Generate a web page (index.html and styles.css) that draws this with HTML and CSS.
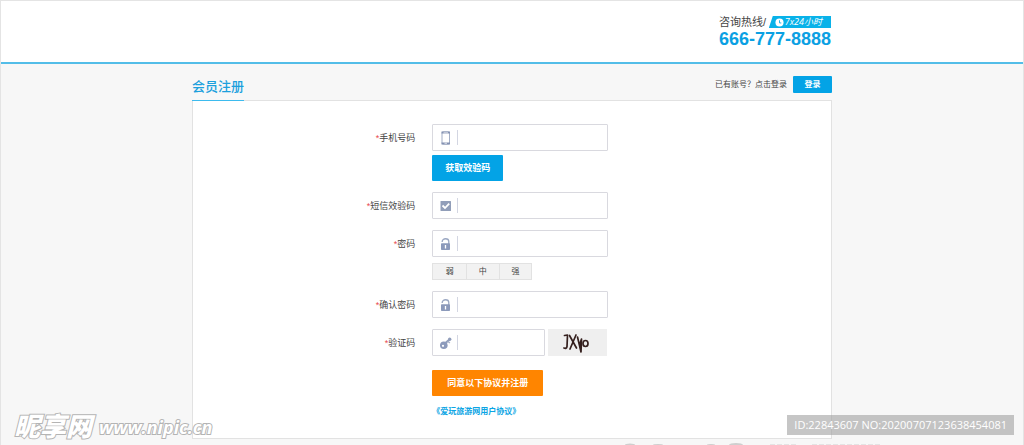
FILE: index.html
```html
<!DOCTYPE html>
<html lang="zh-CN">
<head>
<meta charset="utf-8">
<meta name="viewport" content="width=device-width, initial-scale=1">
<title>会员注册</title>
<link rel="stylesheet" href="styles.css">
</head>
<body>
<header class="site-header">
  <div class="container header-inner">
    <div class="hotline">
      <div class="hotline-top">
        <span>咨询热线/</span>
        <span class="hours">
          <svg class="hours-icon" viewBox="0 0 10 10" aria-hidden="true"><circle cx="5" cy="5" r="4.5" fill="#fff"/><path d="M5 2.5V5.5H7" fill="none" stroke="#09aee8"/></svg>
          <em>7x24小时</em>
        </span>
      </div>
      <strong class="hotline-number">666-777-8888</strong>
    </div>
  </div>
</header>

<main class="container">
  <div class="title-bar">
    <h1 class="title">会员注册</h1>
    <div class="login">
      <span>已有账号？点击登录</span>
      <button class="btn btn-login" type="button">登录</button>
    </div>
  </div>

  <form class="panel">
    <div class="row">
      <label class="label" for="phone"><i>*</i>手机号码</label>
      <div class="field">
        <svg class="icon" viewBox="0 0 12 14" aria-hidden="true"><rect x="2" y="1" width="7.500" height="12" rx="1" fill="#fff" stroke="#a3aec6"/><path d="M1.500 1.500H10M1.500 12.500H10" stroke="#8492b2" stroke-width="1.800"/><path d="M3.500 1.800H8M4.500 12.300H7" stroke="#fff" stroke-width=".7"/></svg>
        <input class="input" id="phone" type="tel">
      </div>
    </div>
    <div class="row row-code">
      <button class="btn btn-code" type="button">获取效验码</button>
    </div>
    <div class="row row-gap">
      <label class="label" for="sms"><i>*</i>短信效验码</label>
      <div class="field">
        <svg class="icon" viewBox="0 0 12 14" aria-hidden="true"><rect x=".5" y="2" width="10.500" height="10" rx=".5" fill="#919eb9"/><path d="M2.500 6.500L5 9L9.200 4.600" fill="none" stroke="#fff" stroke-width="1.800"/></svg>
        <input class="input" id="sms" type="text">
      </div>
    </div>
    <div class="row row-gap">
      <label class="label" for="password"><i>*</i>密码</label>
      <div class="field">
        <svg class="icon" viewBox="0 0 12 14" aria-hidden="true"><path d="M2.200 5V4.500C2.200 .8 8.800 .8 8.800 4.500V7" fill="none" stroke="#9aa7c2" stroke-width="1.300"/><rect x="1" y="6.300" width="9" height="6.700" rx=".8" fill="#8c9abb"/><path d="M5.500 8V11.500" stroke="#fff" stroke-width="1.300"/></svg>
        <input class="input" id="password" type="password">
      </div>
    </div>
    <div class="row row-strength">
      <div class="strength"><span>弱</span><span>中</span><span>强</span></div>
    </div>
    <div class="row row-gap">
      <label class="label" for="confirm"><i>*</i>确认密码</label>
      <div class="field">
        <svg class="icon" viewBox="0 0 12 14" aria-hidden="true"><path d="M2.200 5V4.500C2.200 .8 8.800 .8 8.800 4.500V7" fill="none" stroke="#9aa7c2" stroke-width="1.300"/><rect x="1" y="6.300" width="9" height="6.700" rx=".8" fill="#8c9abb"/><path d="M5.500 8V11.500" stroke="#fff" stroke-width="1.300"/></svg>
        <input class="input" id="confirm" type="password">
      </div>
    </div>
    <div class="row row-gap">
      <label class="label" for="captcha"><i>*</i>验证码</label>
      <div class="field field-short">
        <svg class="icon" viewBox="0 0 12 14" aria-hidden="true"><path d="M5 7.500L10 3" stroke="#919ebb" stroke-width="2.200"/><circle cx="9.700" cy="3.300" r="1.700" fill="#919ebb"/><path d="M7.800 5.300L9.800 7" stroke="#a5b0c8" stroke-width="1.500"/><circle cx="3.800" cy="9.200" r="3.800" fill="#8c9abb"/><circle cx="3" cy="9.800" r="1.100" fill="#fff"/></svg>
        <input class="input" id="captcha" type="text">
      </div>
      <svg class="captcha" viewBox="0 0 59 27" role="img" aria-label="验证码图片">
        <rect width="59" height="27" fill="#efefef"/>
        <g fill="none" stroke="#35201e" stroke-width="1.700" stroke-linecap="round" stroke-linejoin="round">
          <path d="M16.500 6.500L19.500 6L19 17.500Q18.500 20 16 19"/>
          <path d="M21.500 6.500L28.500 19M28 6L22 20"/>
          <path d="M29.500 8L31.500 16.500L33.500 10L33 23L31.500 16.500"/>
          <ellipse cx="37.500" cy="14.500" rx="2.500" ry="3"/>
        </g>
      </svg>
    </div>
    <div class="row row-submit">
      <button class="btn btn-submit" type="submit">同意以下协议并注册</button>
    </div>
    <div class="row row-link">
      <a class="agreement" href="#agreement">《爱玩旅游网用户协议》</a>
    </div>
  </form>
</main>

<svg class="footer-art" viewBox="0 0 260 2" aria-hidden="true"><g fill="#cfcfcf"><ellipse cx="6" cy="2" rx="5" ry="1.500"/><ellipse cx="34" cy="2" rx="5" ry="1"/><ellipse cx="87" cy="2" rx="4" ry="1"/><ellipse cx="112" cy="2" rx="7" ry="2"/></g><path d="M146 1.500H172M188 1.500H258" stroke="#e4e4e4" stroke-dasharray="5 2"/></svg>
<div class="watermark"><b>昵享网</b><em>www.nipic.cn</em></div>
<div class="image-id">ID:22843607 NO:20200707123638454081</div>
</body>
</html>
```
FILE: styles.css
```css
* {
  box-sizing: border-box;
}

body {
  position: relative;
  min-height: 100vh;
  margin: 0;
  overflow: hidden;
  border: 1px solid #e4e4e4;
  border-bottom: 0;
  background: #f7f7f7;
  color: #444;
  font: 9px/12px "Liberation Sans", "Noto Sans CJK SC", sans-serif;
}

.container {
  width: 100%;
  max-width: 640px;
  margin: 0 auto;
}

.site-header {
  border-bottom: 2px solid #53bde8;
  background: #fff;
}

.header-inner {
  display: flex;
  justify-content: flex-end;
  padding: 14px 1px 13px 0;
}

.hotline-top {
  display: flex;
  align-items: center;
  justify-content: space-between;
  font-size: 11px;
  line-height: 14px;
}

.hours {
  display: flex;
  align-items: center;
  gap: 1px;
  padding: 0 9px 0 6px;
  background: #09b2e9;
  clip-path: polygon(4px 0, 100% 0, 100% 100%, 0 100%);
  color: #fff;
  font: 9px/12px "Open Sans", "Noto Sans CJK SC", sans-serif;
}

.hours-icon {
  width: 9px;
  height: 9px;
}

.hotline-number {
  display: block;
  color: #0aa0e3;
  font-size: 18px;
  line-height: 20px;
}

.title-bar {
  display: flex;
  align-items: flex-start;
  justify-content: space-between;
  padding-top: 12px;
}

.title {
  z-index: 1;
  margin: 0 0 -1px;
  padding-bottom: 2px;
  border-bottom: 1px solid #3dbbee;
  color: #1ba0dd;
  font-size: 13px;
  font-weight: 500;
  line-height: 22px;
}

.login {
  display: flex;
  align-items: center;
  gap: 6px;
  font-size: 8px;
}

.btn {
  padding: 0;
  border: 0;
  border-radius: 1px;
  background: #03a3e6;
  color: #fff;
  font: bold 9px/26px "Liberation Sans", "Noto Sans CJK SC", sans-serif;
  cursor: pointer;
}

.btn-login {
  width: 39px;
  font-size: 8px;
  line-height: 17px;
}

.panel {
  padding: 23px 0 20px;
  border: 1px solid #e2e2e2;
  background: #fff;
}

.row {
  display: grid;
  grid-template-columns: 35% auto auto 1fr;
  align-items: center;
}

.row-gap {
  margin-top: 11px;
}

.row-code {
  margin-top: 4px;
}

.row-strength {
  margin-top: 6px;
}

.row-submit {
  margin-top: 14px;
}

.row-link {
  margin-top: 10px;
}

.row > :not(.label) {
  margin-left: 16px;
}

.row > :first-child:not(.label) {
  grid-column: 2;
}

.label {
  padding-right: 1px;
  text-align: right;
}

.label i {
  color: #e8484c;
  font-style: normal;
}

.field {
  display: flex;
  align-items: center;
  width: 176px;
  height: 27px;
  padding: 0 4px 0 7px;
  border: 1px solid #d9d9df;
  border-radius: 1px;
  background: #fff;
}

.field-short {
  width: 113px;
}

.icon {
  flex: none;
  width: 12px;
  height: 14px;
}

.input {
  flex: 1;
  min-width: 0;
  height: 15px;
  margin-left: 5px;
  padding: 0 4px;
  border: 0;
  border-left: 1px solid #d3d6e2;
  outline: 0;
  background: none;
  font: inherit;
}

.row > .captcha {
  width: 59px;
  height: 27px;
  margin-left: 3px;
}

.btn-code {
  width: 71px;
}

.btn-submit {
  width: 111px;
  background: #ff8500;
}

.strength {
  display: grid;
  grid-template-columns: 1fr 1fr 1fr;
  width: 100px;
  border: 1px solid #e2e2e2;
  background: #f2f2f2;
  font-size: 8px;
  line-height: 15px;
  text-align: center;
}

.strength span + span {
  border-left: 1px solid #e2e2e2;
}

.agreement {
  color: #0ba5e4;
  font-size: 8px;
  font-weight: bold;
  text-decoration: none;
}

.footer-art {
  position: absolute;
  bottom: 0;
  left: 61%;
  width: 260px;
  height: 2px;
}

.watermark {
  position: absolute;
  bottom: 4px;
  left: 13px;
  display: flex;
  align-items: center;
  gap: 7px;
  color: #fff;
  font-style: italic;
  line-height: 28px;
  paint-order: stroke fill;
  -webkit-text-stroke: 2px #b4b4b4;
}

.watermark b {
  font-size: 26px;
  font-weight: 900;
}

.watermark em {
  font: italic bold 18px/28px "Open Sans", sans-serif;
}

.image-id {
  position: absolute;
  right: 9px;
  bottom: 10px;
  padding: 0 7px;
  background: rgba(160, 160, 160, .6);
  color: #fff;
  font: 11px/20px "Open Sans", sans-serif;
}
```
